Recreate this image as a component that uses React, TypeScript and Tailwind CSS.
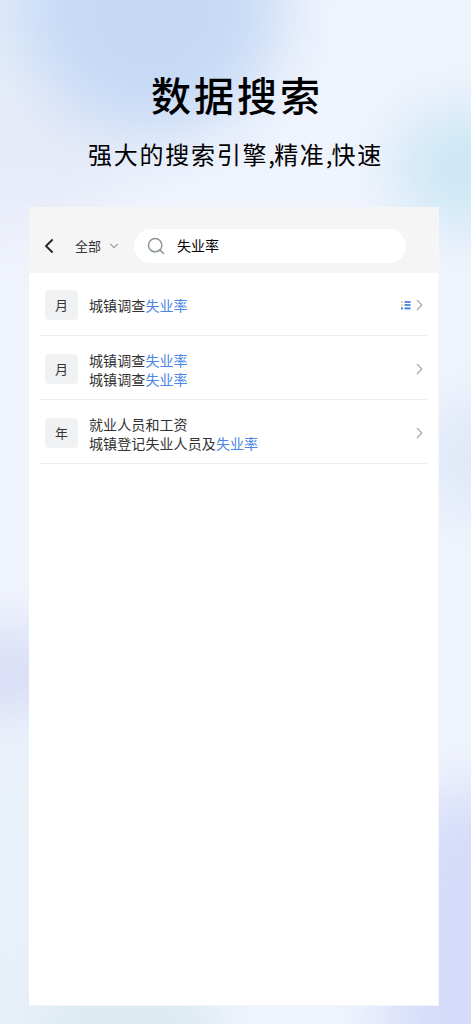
import { Search } from 'lucide-react';

interface Line {
    text: string;
    match?: string;
}

interface Result {
    period: string;
    lines: Line[];
    hasList?: boolean;
}

const RESULTS: Result[] = [
    { period: '月', lines: [{ text: '城镇调查', match: '失业率' }], hasList: true },
    {
        period: '月',
        lines: [
            { text: '城镇调查', match: '失业率' },
            { text: '城镇调查', match: '失业率' },
        ],
    },
    {
        period: '年',
        lines: [{ text: '就业人员和工资' }, { text: '城镇登记失业人员及', match: '失业率' }],
    },
];

function BackIcon() {
    return (
        <svg width="10" height="16" viewBox="0 0 10 16" fill="none" className="ml-[6px]">
            <path d="M8.6 1.5 2 8l6.6 6.5" stroke="#222" strokeWidth="1.8" />
        </svg>
    );
}

function DownIcon() {
    return (
        <svg width="10" height="6" viewBox="0 0 10 6" fill="none" className="ml-[8px]">
            <path d="m1.2.8 3.8 3.8L8.8.8" stroke="#999" strokeWidth="1.1" />
        </svg>
    );
}

function ArrowIcon() {
    return (
        <svg width="7" height="12" viewBox="0 0 7 12" fill="none" className="mr-[4px]">
            <path d="m1 1 4.8 5L1 11" stroke="#a3a8ac" strokeWidth="1.2" />
        </svg>
    );
}

function ListIcon() {
    return (
        <svg width="11" height="9" viewBox="0 0 11 9" className="mt-px mr-[5px]">
            <rect x="1" y="0" width="2" height="2" fill="#f6d494" />
            <rect x="1" y="3" width="2" height="2" fill="#f6d494" />
            <rect x="1" y="6.4" width="2" height="2" fill="#4a86e4" />
            <rect x="4.5" y="0" width="6" height="2" fill="#5b8fe0" />
            <rect x="4.5" y="3" width="6" height="2" fill="#5b8fe0" />
            <rect x="4.5" y="6.4" width="6" height="2" fill="#4285e0" />
        </svg>
    );
}

// soft colour spots behind the card
function Backdrop() {
    return (
        <div className="absolute inset-0 overflow-hidden">
            <div className="absolute left-[-110px] top-[-90px] h-[190px] w-[190px] rounded-full bg-[#e3eefa] blur-[30px]" />
            <div className="absolute left-[-110px] top-[80px] h-[150px] w-[230px] rounded-full bg-[#e7ebf8] blur-[32px]" />
            <div className="absolute left-[20px] top-[-180px] h-[318px] w-[262px] rounded-full bg-[#c5d9f5] blur-[32px]" />
            <div className="absolute left-[394px] top-[108px] h-[120px] w-[160px] rounded-full bg-[#cde7f5] blur-[28px]" />
            <div className="absolute left-[415px] top-[398px] h-[120px] w-[120px] rounded-full bg-[#dfe9f7] blur-[26px]" />
            <div className="absolute left-[-80px] top-[627px] h-[96px] w-[150px] rounded-full bg-[#dadff7] blur-[24px]" />
            <div className="absolute left-[-110px] top-[740px] h-[340px] w-[200px] rounded-full bg-[#e8f0f9] blur-[32px]" />
            <div className="absolute left-[40px] top-[965px] h-[130px] w-[180px] rounded-full bg-[#dceaf2] blur-[24px]" />
            <div className="absolute left-[385px] top-[790px] h-[330px] w-[220px] rounded-[80px] bg-[#d5dcf9] blur-[28px]" />
        </div>
    );
}

function SearchHeader() {
    return (
        <div className="flex h-[66px] items-center bg-[#f5f5f5] pt-[12px] pl-[9px]">
            <BackIcon />
            <span className="-mt-px ml-[21px] text-[13px] text-[#333]">全部</span>
            <DownIcon />
            <div className="ml-[15px] flex h-[34px] w-[272px] items-center rounded-full bg-white pl-[12px]">
                <Search className="h-5 w-5 text-[#8a959c]" strokeWidth={1.8} />
                <span className="-mt-0.5 ml-[11px] text-sm leading-none text-black">失业率</span>
            </div>
        </div>
    );
}

function ResultRow({ result }: { result: Result }) {
    return (
        <div className="mx-[11px] flex h-16 items-center border-b border-[#ebedef] pt-[3px] pl-[5px] first:h-[63px] first:pt-px">
            <div className="flex h-[30px] w-[33px] items-center justify-center rounded bg-[#f0f1f3] text-[13px] text-[#333]">
                {result.period}
            </div>
            <div className="ml-[11px] flex-1 pt-[2px] text-sm leading-[19px] tracking-[0.1px] text-[#333]">
                {result.lines.map((line, i) => (
                    <p key={i}>
                        {line.text}
                        {line.match && <span className="text-[#4a86e4]">{line.match}</span>}
                    </p>
                ))}
            </div>
            {result.hasList && <ListIcon />}
            <ArrowIcon />
        </div>
    );
}

export default function App() {
    return (
        <main className="relative h-[1024px] w-[471px] overflow-hidden bg-[#f0f4fd] font-['Noto_Sans_CJK_SC',sans-serif]">
            <Backdrop />
            <div className="relative flex flex-col pt-[64px]">
                <h1 className="pl-[3px] text-center text-[40px] leading-[60px] font-medium tracking-[3px] text-black">
                    数据搜索
                </h1>
                <p className="mt-[12px] text-center text-2xl leading-[36px] tracking-[1.75px] text-black">
                    强大的搜索引擎<span className="tracking-[-0.7px]">,</span>精准
                    <span className="tracking-[-0.7px]">,</span>快速
                </p>
                <section className="mt-[35px] ml-[29px] h-[799px] w-[410px] border-r border-b border-[#f4f6fc] bg-white">
                    <SearchHeader />
                    <div>
                        {RESULTS.map((result, i) => (
                            <ResultRow key={i} result={result} />
                        ))}
                    </div>
                </section>
            </div>
        </main>
    );
}
